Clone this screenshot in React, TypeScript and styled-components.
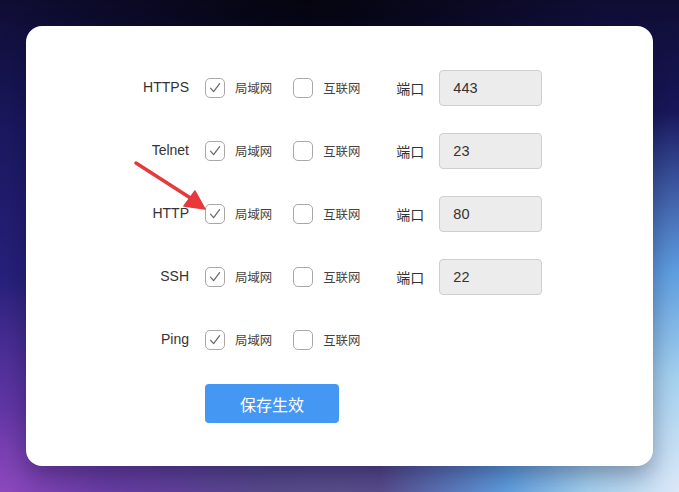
import React from "react";
import styled, { createGlobalStyle } from "styled-components";

const Global = createGlobalStyle`
  html, body { margin: 0; padding: 0; }
  body {
    width: 679px;
    height: 492px;
    overflow: hidden;
    font-family: "Helvetica Neue", "Liberation Sans", "Noto Sans CJK SC", sans-serif;
    background:
      radial-gradient(ellipse 260px 210px at 0% 100%, #8c48bd 0%, rgba(120,60,180,0.6) 40%, rgba(80,40,150,0) 100%),
      radial-gradient(ellipse 300px 380px at 100% 100%, #dbe8f8 0%, #a6d2f0 30%, #5f9ee0 58%, rgba(50,80,180,0) 100%),
      radial-gradient(ellipse 420px 90px at 50% 100%, #5a4f8a 0%, rgba(70,50,120,0) 100%),
      radial-gradient(ellipse 300px 120px at 45% 0%, #05040e 0%, rgba(8,6,20,0) 100%),
      linear-gradient(180deg, #0f0d33 0%, #1a185e 25%, #27207a 55%, #3c2b8c 80%, #4f3396 100%);
  }
  #root { position: relative; width: 679px; height: 492px; }
`;

const Stage = styled.div`
  position: relative;
  width: 679px;
  height: 492px;
  padding: 26px;
  box-sizing: border-box;
`;

const Card = styled.div`
  width: 627px;
  height: 440px;
  box-sizing: border-box;
  background: #ffffff;
  border-radius: 16px;
  box-shadow: 0 10px 24px rgba(10, 10, 40, 0.35);
  padding: 44px 0 0 0;
  display: flex;
  flex-direction: column;
  gap: 27px;
`;

const Row = styled.div`
  height: 36px;
  display: flex;
  align-items: center;
`;

const Label = styled.div`
  width: 163px;
  text-align: right;
  margin-right: 16px;
  font-size: 14px;
  color: #333;
  margin-top: -2px;
`;

const CheckItem = styled.label`
  display: inline-flex;
  align-items: center;
  gap: 10px;
  margin-right: 21px;
  font-size: 12.4px;
  color: #444;
  font-family: "Noto Sans CJK SC", sans-serif;
`;

const CheckText = styled.span`
  margin-top: -1px;
`;

const Box = styled.span`
  width: 20px;
  height: 20px;
  box-sizing: border-box;
  border: 1px solid #a8a8a8;
  border-radius: 5px;
  background: #fff;
  display: inline-flex;
  align-items: center;
  justify-content: center;
`;

const PortLabel = styled.span`
  margin-left: 15px;
  margin-right: 15px;
  font-size: 14px;
  color: #333;
  font-family: "Noto Sans CJK SC", sans-serif;
  margin-top: -1px;
`;

const PortInput = styled.div`
  width: 103px;
  height: 36px;
  box-sizing: border-box;
  background: #ececec;
  border: 1px solid #cfcfcf;
  border-radius: 4px;
  padding-left: 13px;
  display: flex;
  align-items: center;
  font-size: 14.5px;
  color: #333;
`;

const Button = styled.button`
  margin-left: 179px;
  margin-top: -1px;
  width: 134px;
  height: 39px;
  border: none;
  border-radius: 4px;
  background: #4597f4;
  color: #fff;
  font-size: 16px;
  font-family: "Noto Sans CJK SC", sans-serif;
  cursor: pointer;
`;

const ArrowSvg = styled.svg`
  position: absolute;
  left: 0;
  top: 0;
  pointer-events: none;
`;

const Check = () => (
  <svg width="14" height="14" viewBox="0 0 14 14">
    <path d="M2.5 7.2 L5.6 10.6 L11.6 2.6" fill="none" stroke="#666" strokeWidth="1.2" strokeLinecap="round" strokeLinejoin="round" />
  </svg>
);

const CheckBox: React.FC<{ checked: boolean; text: string }> = ({ checked, text }) => (
  <CheckItem>
    <Box>{checked && <Check />}</Box>
    <CheckText>{text}</CheckText>
  </CheckItem>
);

const rows: { name: string; port?: string }[] = [
  { name: "HTTPS", port: "443" },
  { name: "Telnet", port: "23" },
  { name: "HTTP", port: "80" },
  { name: "SSH", port: "22" },
  { name: "Ping" },
];

export default function App() {
  return (
    <>
      <Global />
      <Stage>
        <Card>
          {rows.map((r) => (
            <Row key={r.name}>
              <Label>{r.name}</Label>
              <CheckBox checked text="局域网" />
              <CheckBox checked={false} text="互联网" />
              {r.port && (
                <>
                  <PortLabel>端口</PortLabel>
                  <PortInput>{r.port}</PortInput>
                </>
              )}
            </Row>
          ))}
          <Button>保存生效</Button>
        </Card>
        <ArrowSvg width="679" height="492" viewBox="0 0 679 492">
          <path d="M136 163 L192 199" stroke="#e8393a" strokeWidth="3.5" strokeLinecap="round" />
          <path d="M205 209 L184 206 L195 191 Z" fill="#e8393a" stroke="#e8393a" strokeWidth="1.5" strokeLinejoin="round" />
        </ArrowSvg>
      </Stage>
    </>
  );
}
